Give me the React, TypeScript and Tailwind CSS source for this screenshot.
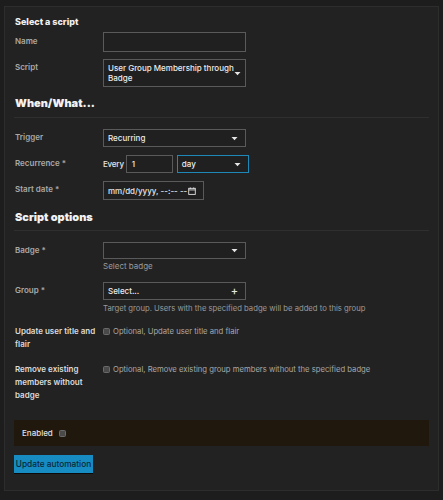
import React from "react"

const font = { fontFamily: "Inter, 'Noto Sans', sans-serif" }

function Caret() {
  return (
    <svg width="7" height="5" viewBox="0 0 7 5" className="shrink-0">
      <path d="M0.5 1 L6.5 1 L3.5 4.2 Z" fill="#e6e6e6" />
    </svg>
  )
}

function Label({ children, strong }: { children: React.ReactNode; strong?: boolean }) {
  return (
    <div
      className={`w-[89px] shrink-0 pl-[1px] text-[8px] leading-[13px] font-semibold whitespace-nowrap ${
        strong ? "text-[#dcdcdc]" : "text-[#a9a9a9]"
      }`}
    >
      {children}
    </div>
  )
}

function Select({ text, h = "h-[18px]", children }: { text?: string; h?: string; children?: React.ReactNode }) {
  return (
    <div
      className={`w-[143px] ${h} border border-[#5a5a5a] bg-[#202020] flex items-center justify-between pl-[4px] pr-[7px] text-[8px] font-medium text-[#ececec]`}
    >
      <span>{text}</span>
      {children ?? <Caret />}
    </div>
  )
}

function Heading({ children }: { children: React.ReactNode }) {
  return <div className="text-[11px] leading-[18px] font-black text-[#f2f2f2]">{children}</div>
}

function Check() {
  return <span className="inline-block w-[7px] h-[7px] rounded-[1.5px] bg-[#4a4a4a] border border-[#6a6a6a] shrink-0" />
}

export default function App() {
  return (
    <div className="w-[443px] h-[500px] bg-[#1d1d1d] pt-[6px] px-[4px]" style={font}>
      <div className="border border-[#2d2d2d] bg-[#222222] px-[9px] pt-[8px] pb-[17px]">
        <div className="pl-[1px] text-[9px] leading-[14px] font-extrabold text-[#f0f0f0]">Select a script</div>

        <div className="flex mt-[3px]">
          <div className="pt-[3px]">
            <Label>Name</Label>
          </div>
          <div className="w-[143px] h-[20px] border border-[#5a5a5a] bg-[#202020]" />
        </div>

        <div className="flex mt-[7px]">
          <div className="pt-[2px]">
            <Label>Script</Label>
          </div>
          <div className="w-[143px] h-[28px] border border-[#5a5a5a] bg-[#202020] flex items-center justify-between pl-[4px] pr-[7px]">
            <span className="text-[8px] leading-[10px] font-medium text-[#ececec] whitespace-nowrap">
              User Group Membership through
              <br />
              Badge
            </span>
            <Caret />
          </div>
        </div>

        <div className="mt-[7px] pl-[1px]">
          <Heading>When/What...</Heading>
        </div>
        <div className="mt-[5px] border-t border-[#2f2f2f]" />

        <div className="flex mt-[11px]">
          <div className="pt-[2px]">
            <Label>Trigger</Label>
          </div>
          <Select text="Recurring" />
        </div>

        <div className="flex mt-[8px]">
          <div className="pt-[2px]">
            <Label>Recurrence *</Label>
          </div>
          <div className="flex items-center">
            <span className="text-[8px] font-medium text-[#e6e6e6] mr-[2px] tracking-[-0.2px]">Every</span>
            <div className="w-[47px] h-[18px] border border-[#5a5a5a] bg-[#202020] flex items-center pl-[5px] text-[8px] font-medium text-[#ececec]">
              1
            </div>
            <div className="ml-[4px] w-[72px] h-[18px] border border-[#1e88b9] bg-[#202020] flex items-center justify-between pl-[4px] pr-[7px] text-[8px] font-medium text-[#ececec]">
              <span>day</span>
              <Caret />
            </div>
          </div>
        </div>

        <div className="flex mt-[8px]">
          <div className="pt-[2px]">
            <Label>Start date *</Label>
          </div>
          <div className="w-[101px] h-[19px] border border-[#5a5a5a] bg-[#202020] flex items-center pl-[4px] gap-[1px] text-[8px] font-medium text-[#e6e6e6] whitespace-nowrap">
            <span>mm/dd/yyyy, --:-- --</span>
            <svg width="8" height="8" viewBox="0 0 9 9" className="shrink-0">
              <rect x="0.8" y="1.5" width="7.4" height="6.8" fill="none" stroke="#e6e6e6" strokeWidth="1" />
              <line x1="0.8" y1="3.3" x2="8.2" y2="3.3" stroke="#e6e6e6" strokeWidth="1" />
              <line x1="2.6" y1="0.5" x2="2.6" y2="2" stroke="#e6e6e6" />
              <line x1="6.4" y1="0.5" x2="6.4" y2="2" stroke="#e6e6e6" />
            </svg>
          </div>
        </div>

        <div className="mt-[8px] pl-[1px]">
          <Heading>Script options</Heading>
        </div>
        <div className="mt-[4px] border-t border-[#2f2f2f]" />

        <div className="flex mt-[11px]">
          <div className="pt-[2px]">
            <Label>Badge *</Label>
          </div>
          <div>
            <Select h="h-[17px]" />
            <div className="mt-[2px] text-[8px] leading-[11px] text-[#9a9a9a]">Select badge</div>
          </div>
        </div>

        <div className="flex mt-[10px]">
          <div className="pt-[2px]">
            <Label>Group *</Label>
          </div>
          <div>
            <Select text="Select...">
              <span className="text-[11px] leading-none text-[#e6e6e6]">+</span>
            </Select>
            <div className="mt-[3px] text-[7.7px] leading-[11px] text-[#9a9a9a] whitespace-nowrap">
              Target group. Users with the specified badge will be added to this group
            </div>
          </div>
        </div>

        <div className="flex mt-[11px]">
          <Label strong>
            Update user title and
            <br />
            flair
          </Label>
          <div className="flex items-center gap-[3px] h-[13px] text-[7.7px] text-[#a8a8a8] whitespace-nowrap">
            <Check />
            <span>Optional, Update user title and flair</span>
          </div>
        </div>

        <div className="flex mt-[12px]">
          <Label strong>
            Remove existing
            <br />
            members without
            <br />
            badge
          </Label>
          <div className="flex items-center gap-[3px] h-[13px] text-[7.7px] text-[#a8a8a8] whitespace-nowrap">
            <Check />
            <span>Optional, Remove existing group members without the specified badge</span>
          </div>
        </div>

        <div className="mt-[18px] h-[26px] bg-[#21180d] flex items-center pl-[8px] gap-[6px]">
          <span className="text-[8px] font-medium text-[#e0e0e0]">Enabled</span>
          <Check />
        </div>

        <button className="mt-[9px] h-[18px] w-[79px] bg-[#168cc2] text-[8.3px] font-medium text-[#0b2838] flex items-center justify-center shadow-[0_1px_0_#0b0b0b] whitespace-nowrap">
          Update automation
        </button>
      </div>
    </div>
  )
}
